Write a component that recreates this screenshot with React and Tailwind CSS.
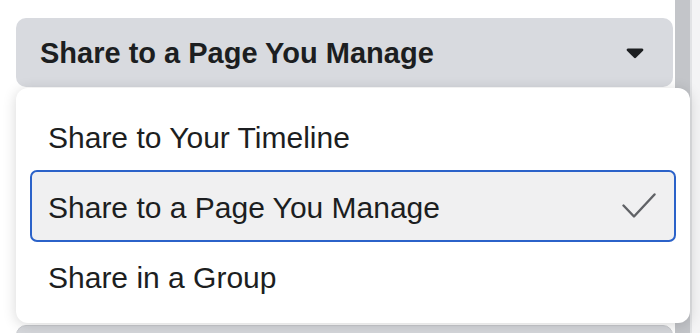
import React from 'react';

const items = [
  { label: 'Share to Your Timeline', h: 'h-[69px]' },
  { label: 'Share to a Page You Manage', h: 'h-[72px]', selected: true },
  { label: 'Share in a Group', h: 'h-[68px]' },
];

function Caret() {
  return (
    <svg width="18" height="12" viewBox="0 0 18 12">
      <path d="M2 1.5h14c1.2 0 1.8 1.3 1 2.2L10.2 10.6c-.7.7-1.7.7-2.4 0L1 3.7C.2 2.8.8 1.5 2 1.5z" fill="#1c1e21" />
    </svg>
  );
}

function Check() {
  return (
    <svg width="34" height="26" viewBox="0 0 34 26" fill="none">
      <path d="M1.5 12.5l10.5 11L32.5 1.5" stroke="#606266" strokeWidth="2.4" strokeLinecap="round" strokeLinejoin="round" />
    </svg>
  );
}

export default function App() {
  return (
    <div className="relative flex h-[333px] w-[700px] overflow-hidden bg-white font-['Liberation_Sans',Arial,sans-serif] text-[#1c1e21]">
      {/* page under the menu */}
      <div className="flex w-[675px] flex-col pl-4 pr-[2px] pt-[18px]">
        <div className="flex h-[69px] shrink-0 items-center justify-between rounded-[10px] bg-[#d8dadf] pl-6 pr-[29px]">
          <span className="pt-[3px] text-[29px] font-bold">Share to a Page You Manage</span>
          <Caret />
        </div>
        <div className="mt-[238px] h-[69px] shrink-0 rounded-[10px] border border-[#c9cbcf] bg-[#d5d7db]" />
      </div>
      <div className="w-[15px] bg-[#c3c5c9]" />
      <div className="w-[10px] border-l-2 border-[#e2e3e5] bg-[#f4f4f5]" />

      {/* open menu */}
      <div className="absolute left-4 top-[88px] w-[674px] rounded-[12px] bg-white px-[14px] py-[13px] shadow-[0_2px_14px_rgba(0,0,0,0.16)]">
        {items.map((it) => (
          <div
            key={it.label}
            className={
              it.h +
              ' flex items-center justify-between rounded-[7px] border-[2.5px] pl-4 pr-[18px] text-[30px] ' +
              (it.selected ? 'border-[#2b62c9] bg-[#f0f0f1]' : 'border-transparent')
            }
          >
            <span className="pt-[3px]">{it.label}</span>
            {it.selected && <Check />}
          </div>
        ))}
      </div>
    </div>
  );
}
